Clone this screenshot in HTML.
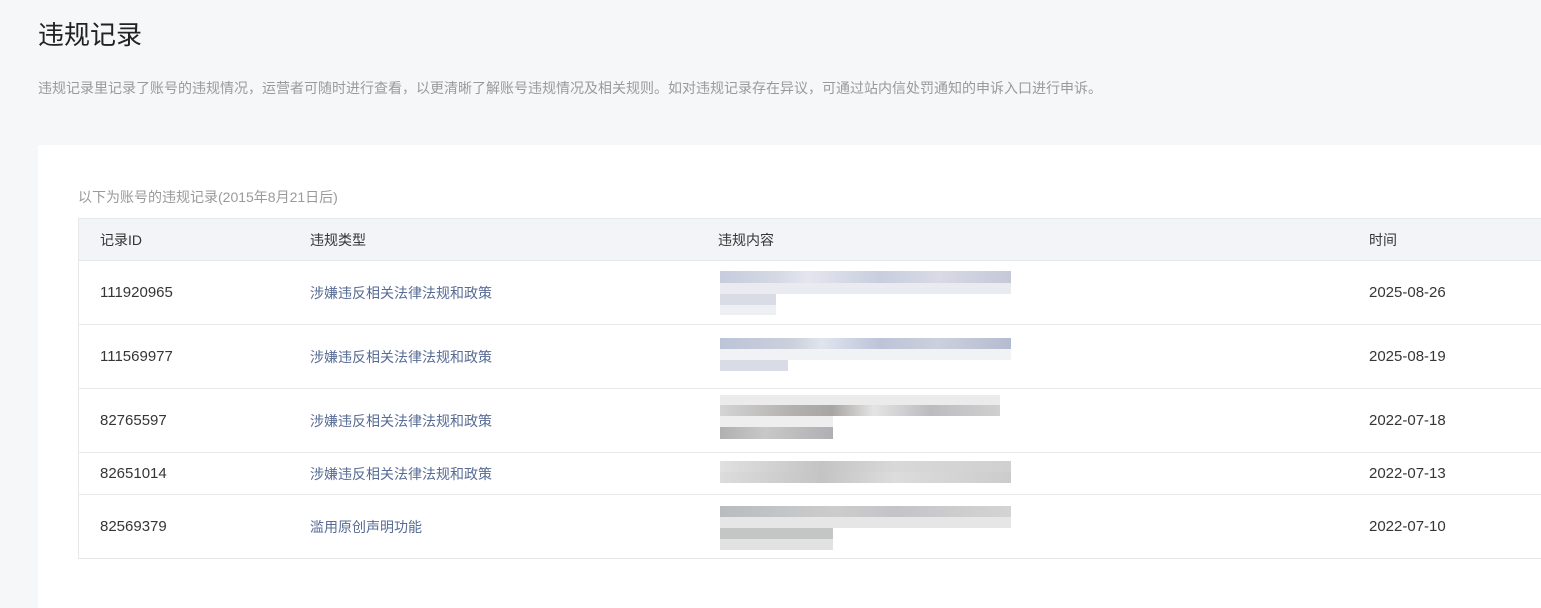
<!DOCTYPE html>
<html><head><meta charset="utf-8"><style>
*{margin:0;padding:0;box-sizing:border-box}
html,body{overflow:hidden}
body{width:1541px;height:608px;background:#f6f7f9;font-family:"Liberation Sans","Noto Sans CJK SC",sans-serif;position:relative;color:#353535}
.a{position:absolute;white-space:nowrap}
.card{position:absolute;left:38px;top:145px;width:1503px;height:463px;background:#fff}
.tbl{position:absolute;left:78px;top:218px;width:1463px;height:341px;border:1px solid #e6e7eb;border-right:none}
.hd{position:absolute;left:0;top:0;width:100%;height:42px;background:#f3f4f8;border-bottom:1px solid #e6e7eb}
.ln{position:absolute;left:79px;width:1462px;height:1px;background:#e8e9ed}
.t{font-size:14px;color:#353535}
.n{font-size:15px;color:#353535}
.lk{font-size:14px;color:#576b95}
.b{position:absolute}
</style></head><body>
<div class="a" style="left:38px;top:15px;font-size:26px;color:#222">违规记录</div>
<div class="a" style="left:38px;top:78px;font-size:14px;color:#9a9a9a">违规记录里记录了账号的违规情况，运营者可随时进行查看，以更清晰了解账号违规情况及相关规则。如对违规记录存在异议，可通过站内信处罚通知的申诉入口进行申诉。</div>
<div class="card"></div>
<div class="a" style="left:78px;top:187px;font-size:14px;color:#9a9a9a">以下为账号的违规记录(2015年8月21日后)</div>
<div class="tbl"><div class="hd"></div></div>
<div class="ln" style="top:324px"></div>
<div class="ln" style="top:388px"></div>
<div class="ln" style="top:452px"></div>
<div class="ln" style="top:494px"></div>
<div class="a t" style="left:100px;top:230px">记录ID</div>
<div class="a t" style="left:310px;top:230px">违规类型</div>
<div class="a t" style="left:718px;top:230px">违规内容</div>
<div class="a t" style="left:1369px;top:230px">时间</div>

<div class="a n" style="left:100px;top:284px">111920965</div>
<div class="a lk" style="left:310px;top:283px">涉嫌违反相关法律法规和政策</div>
<div class="a n" style="left:1369px;top:284px">2025-08-26</div>
<div class="a n" style="left:100px;top:348px">111569977</div>
<div class="a lk" style="left:310px;top:347px">涉嫌违反相关法律法规和政策</div>
<div class="a n" style="left:1369px;top:348px">2025-08-19</div>
<div class="a n" style="left:100px;top:412px">82765597</div>
<div class="a lk" style="left:310px;top:411px">涉嫌违反相关法律法规和政策</div>
<div class="a n" style="left:1369px;top:412px">2022-07-18</div>
<div class="a n" style="left:100px;top:465px">82651014</div>
<div class="a lk" style="left:310px;top:464px">涉嫌违反相关法律法规和政策</div>
<div class="a n" style="left:1369px;top:465px">2022-07-13</div>
<div class="a n" style="left:100px;top:518px">82569379</div>
<div class="a lk" style="left:310px;top:517px">滥用原创声明功能</div>
<div class="a n" style="left:1369px;top:518px">2022-07-10</div>

<div class="b" style="left:720px;top:271px;width:291px;height:12px;background:linear-gradient(90deg,#c6ccdc,#d4d9e4 20%,#e4e6ee 30%,#c8cede 55%,#d8dae4 75%,#c4c8d8)"></div>
<div class="b" style="left:720px;top:283px;width:291px;height:11px;background:#e9ebf0"></div>
<div class="b" style="left:720px;top:294px;width:56px;height:11px;background:#d9dbe5"></div>
<div class="b" style="left:720px;top:305px;width:56px;height:10px;background:#eeeff3"></div>

<div class="b" style="left:720px;top:338px;width:291px;height:11px;background:linear-gradient(90deg,#bcc4d8,#ccd0dc 25%,#e0e4ee 35%,#bcc4d8 55%,#ccd0dc 75%,#b4bcd0)"></div>
<div class="b" style="left:720px;top:349px;width:291px;height:11px;background:#f1f2f5"></div>
<div class="b" style="left:720px;top:360px;width:68px;height:11px;background:#d9dce6"></div>

<div class="b" style="left:720px;top:395px;width:280px;height:10px;background:#ebebeb"></div>
<div class="b" style="left:720px;top:405px;width:280px;height:11px;background:linear-gradient(90deg,#d4d4d4,#b4b2b0 25%,#a8a6a4 40%,#e4e4e4 55%,#bcbcc0 75%,#d0d0d0)"></div>
<div class="b" style="left:720px;top:416px;width:113px;height:11px;background:#eeeeee"></div>
<div class="b" style="left:720px;top:427px;width:113px;height:12px;background:linear-gradient(90deg,#b0b0b0,#c8c8c8 40%,#b0b0b4)"></div>

<div class="b" style="left:720px;top:461px;width:291px;height:11px;background:linear-gradient(90deg,#e0e0e0,#c4c4c4 35%,#d8d8d8 60%,#d0d0d0)"></div>
<div class="b" style="left:720px;top:472px;width:291px;height:11px;background:linear-gradient(90deg,#dcdcdc,#c4c4c4 35%,#dcdcdc 60%,#cccccc)"></div>

<div class="b" style="left:720px;top:506px;width:291px;height:11px;background:linear-gradient(90deg,#b8bcc0,#cccccc 40%,#c4c4c8 60%,#d4d4d4)"></div>
<div class="b" style="left:720px;top:517px;width:291px;height:11px;background:#e6e6e6"></div>
<div class="b" style="left:720px;top:528px;width:113px;height:11px;background:#c4c6c6"></div>
<div class="b" style="left:720px;top:539px;width:113px;height:11px;background:#e2e2e2"></div>
</body></html>
